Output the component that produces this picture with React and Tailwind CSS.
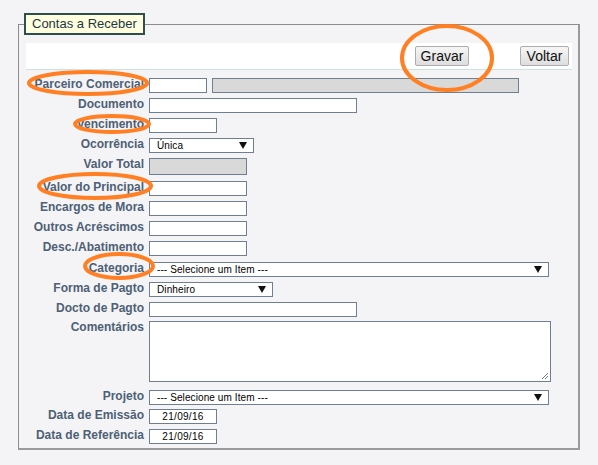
import React from 'react';

const font = { fontFamily: '"Liberation Sans", Arial, sans-serif' };

function Label({ children }) {
    return (
        <div className="w-[118px] shrink-0 text-right text-[12px] leading-[12px] font-bold text-[#4d6075]">
            {children}
        </div>
    );
}

function TextBox({ w, h = 'h-[15px]', gray, children }) {
    return (
        <div className={`${w} ${h} border border-[#6f7f8f] ${gray ? 'bg-[#d9d9d9]' : 'bg-white'} text-[10px] leading-[13px] text-center tracking-[0.3px] text-black`}>
            {children}
        </div>
    );
}

function Select({ w, value }) {
    return (
        <div className={`${w} h-[15px] border border-[#6f7f8f] bg-white flex items-center justify-between pl-[7px] pr-[6px]`}>
            <span className="text-[10px] leading-[13px] tracking-[0.1px] text-black">{value}</span>
            <svg width="8" height="7" viewBox="0 0 8 7">
                <path d="M0 0h8L4 7z" fill="#111" />
            </svg>
        </div>
    );
}

function Row({ label, mt = 'mt-[5px]', children }) {
    return (
        <div className={`flex items-start gap-[5px] ${mt}`}>
            <Label>{label}</Label>
            {children}
        </div>
    );
}

// orange hand-drawn marks over the form
function Marks() {
    const marks = [
        { cx: 88, cy: 83, rx: 59, ry: 11 },
        { cx: 447, cy: 58, rx: 45, ry: 32 },
        { cx: 112, cy: 124, rx: 37, ry: 8 },
        { cx: 95, cy: 186, rx: 56, ry: 12 },
        { cx: 119, cy: 266, rx: 34, ry: 12 },
    ];
    return (
        <svg className="absolute left-0 top-0 pointer-events-none" width="598" height="465">
            {marks.map((m, i) => (
                <ellipse key={i} cx={m.cx} cy={m.cy} rx={m.rx} ry={m.ry} fill="none" stroke="#ff7f22" strokeWidth="4" />
            ))}
        </svg>
    );
}

export default function App() {
    return (
        <div className="relative w-[598px] h-[465px] bg-[#f4f4f6] overflow-hidden" style={font}>
            <fieldset className="ml-[18px] mt-[13px] w-[562px] h-[437px] border-t border-l border-r-2 border-b-2 border-t-[#8c8c8c] border-l-[#8c8c8c] border-r-[#9a9a9a] border-b-[#9a9a9a] pl-[7px] pr-[6px]">
                <legend className="-ml-[2px] h-[22px] px-[6px] border-2 border-[#2f4f4f] bg-[#ffffe0] text-[13px] leading-[18px] text-[#1c3644]">
                    Contas a Receber
                </legend>
                <div className="mt-[8px] h-[27px] bg-white border-b border-[#cbe3de] flex items-center justify-end pr-[3px]">
                    <button className="w-[54px] h-[20px] border border-[#adadad] rounded-[2px] bg-gradient-to-b from-[#f6f6f6] to-[#dedede] text-[14px] leading-[18px] text-[#111]">
                        Gravar
                    </button>
                    <button className="ml-[51px] w-[49px] h-[20px] border border-[#adadad] rounded-[2px] bg-gradient-to-b from-[#f6f6f6] to-[#dedede] text-[14px] leading-[18px] text-[#111]">
                        Voltar
                    </button>
                </div>

                <Row label="Parceiro Comercial" mt="mt-[8px]">
                    <TextBox w="w-[58px]" />
                    <TextBox w="w-[307px]" gray />
                </Row>
                <Row label="Documento">
                    <TextBox w="w-[208px]" />
                </Row>
                <Row label="Vencimento">
                    <TextBox w="w-[68px]" />
                </Row>
                <Row label="Ocorrência">
                    <Select w="w-[105px]" value="Única" />
                </Row>
                <Row label="Valor Total">
                    <TextBox w="w-[98px]" h="h-[17px]" gray />
                </Row>
                <Row label="Valor do Principal" mt="mt-[6px]">
                    <TextBox w="w-[98px]" />
                </Row>
                <Row label="Encargos de Mora">
                    <TextBox w="w-[98px]" />
                </Row>
                <Row label="Outros Acréscimos">
                    <TextBox w="w-[98px]" />
                </Row>
                <Row label="Desc./Abatimento">
                    <TextBox w="w-[98px]" />
                </Row>
                <Row label="Categoria" mt="mt-[6px]">
                    <Select w="w-[400px]" value="--- Selecione um Item ---" />
                </Row>
                <Row label="Forma de Pagto">
                    <Select w="w-[124px]" value="Dinheiro" />
                </Row>
                <Row label="Docto de Pagto">
                    <TextBox w="w-[208px]" />
                </Row>
                <Row label="Comentários" mt="mt-[4px]">
                    <div className="relative w-[402px] h-[61px] border border-[#6f7f8f] bg-white">
                        <svg className="absolute right-[1px] bottom-[1px]" width="8" height="8" viewBox="0 0 8 8">
                            <path d="M7 1L1 7M7 4L4 7" stroke="#777" strokeWidth="1" />
                        </svg>
                    </div>
                </Row>
                <Row label="Projeto" mt="mt-[8px]">
                    <Select w="w-[400px]" value="--- Selecione um Item ---" />
                </Row>
                <Row label="Data de Emissão" mt="mt-[4px]">
                    <TextBox w="w-[68px]">21/09/16</TextBox>
                </Row>
                <Row label="Data de Referência">
                    <TextBox w="w-[68px]">21/09/16</TextBox>
                </Row>
            </fieldset>
            <Marks />
        </div>
    );
}
